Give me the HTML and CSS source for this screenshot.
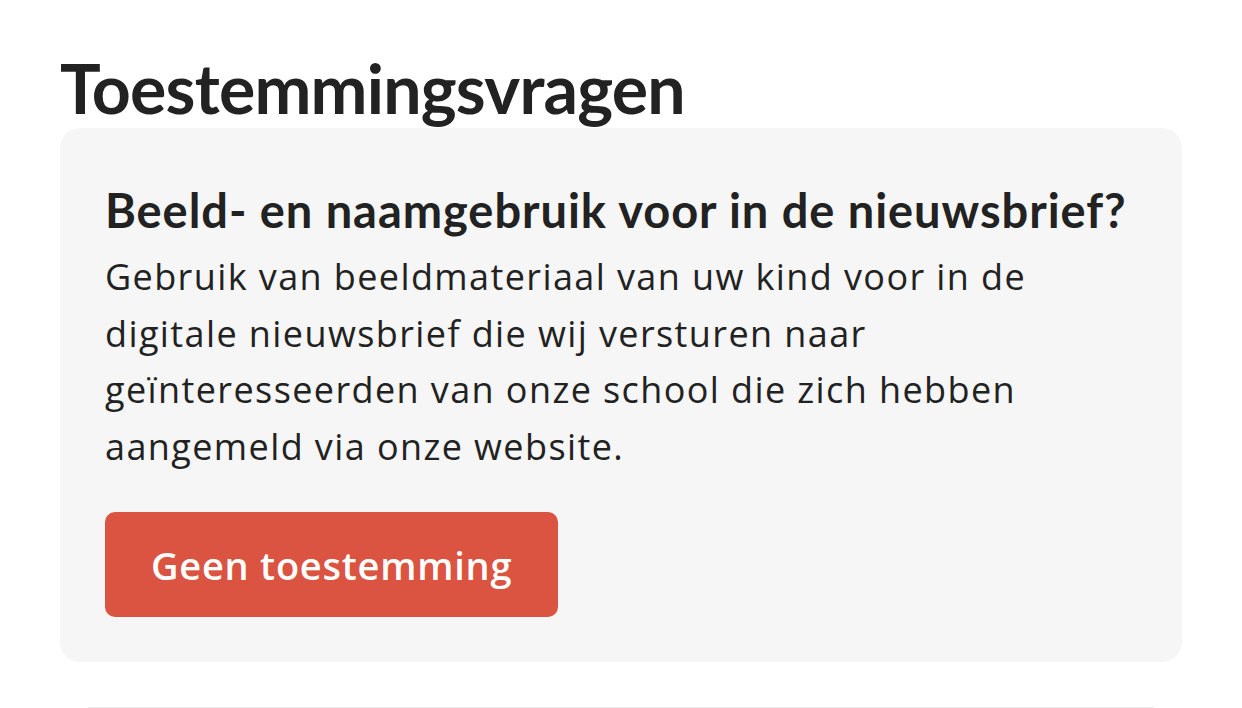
FILE: index.html
```html
<!DOCTYPE html>
<html lang="nl">
<head>
    <meta charset="UTF-8">
    <title>Toestemmingsvragen</title>
    <link rel="stylesheet" href="styles.css">
</head>
<body>
<main class="page">
    <h1 class="page-title">Toestemmingsvragen</h1>

    <!-- one card per consent question -->
    <section class="consent-card">
        <h2>Beeld- en naamgebruik voor in de nieuwsbrief?</h2>
        <p>
            Gebruik van beeldmateriaal van uw kind voor in de digitale nieuwsbrief die wij versturen naar
            geïnteresseerden van onze school die zich hebben aangemeld via onze website.
        </p>
        <button type="button" class="consent-button">Geen toestemming</button>
    </section>

    <hr class="divider">
</main>
</body>
</html>
```

FILE: styles.css
```css
body {
    margin: 0;
    background: #fff;
    color: #222;
    font-family: "Open Sans", sans-serif;
}

.page {
    padding: 0 60px;
}

.page-title {
    margin: 48px 0 0;
    font-family: Lato, sans-serif;
    font-weight: 700;
    font-size: 68px;
    line-height: 80px;
    letter-spacing: -0.8px;
}

.consent-card {
    background: #f6f6f6;
    border-radius: 20px;
    padding: 54px 45px 45px;
}
.consent-card h2 {
    margin: 0 0 11px;
    font-family: Lato, sans-serif;
    font-weight: 700;
    font-size: 47px;
    line-height: 56px;
    letter-spacing: 0.95px;
}
.consent-card p {
    margin: 0 0 37px;
    font-size: 36px;
    line-height: 56.5px;
    letter-spacing: 1.4px;
}

.consent-button {
    display: block;
    height: 105px;
    padding: 0 46px;
    border: none;
    border-radius: 10px;
    background: #da5441;
    color: #fff;
    font-family: "Open Sans", sans-serif;
    font-weight: 600;
    font-size: 38px;
    letter-spacing: 0.75px;
}

.divider {
    margin: 45px 28px 0;
    border: none;
    border-top: 1px solid #ececec;
}
```
